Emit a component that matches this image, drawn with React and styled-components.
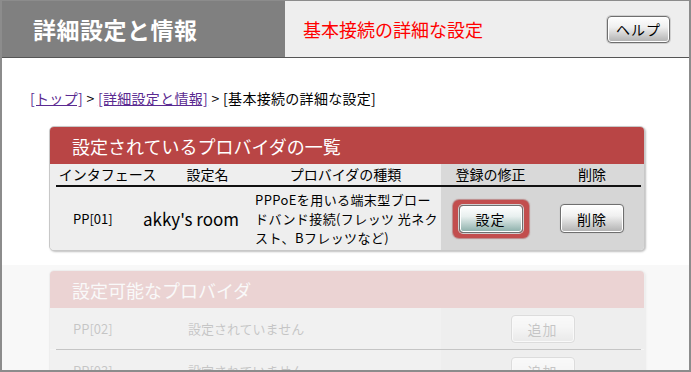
import { createGlobalStyle, styled } from "styled-components";

const GlobalStyle = createGlobalStyle`
	html, body {
		margin: 0;
		padding: 0;
		background: #fff;
	}
	body {
		font-family: "Noto Sans CJK JP", "Noto Sans", sans-serif;
		color: #000;
	}
`;

const Frame = styled.div`
	box-sizing: border-box;
	width: 691px;
	height: 372px;
	border: 2px solid #8c8c8c;
	border-top-width: 1px;
	overflow: hidden;
	background: #fff;
`;

const Header = styled.header`
	display: flex;
	height: 56px;
	border-bottom: 1px solid #555;
`;

const HeaderTitle = styled.h1`
	box-sizing: border-box;
	width: 283px;
	margin: 0;
	padding-left: 31px;
	display: flex;
	align-items: center;
	background: #808080;
	color: #fff;
	font-size: 23px;
	font-weight: 700;
	letter-spacing: 0.5px;
`;

const HeaderBar = styled.div`
	flex: 1;
	display: flex;
	align-items: center;
	justify-content: space-between;
	padding: 0 19px 0 18px;
	background: #eeeeee;
`;

const PageTitle = styled.h2`
	margin: 0;
	color: #ff0000;
	font-size: 18px;
	font-weight: 400;
`;

const Button = styled.button`
	box-sizing: border-box;
	width: ${(p) => p.$width || 64}px;
	height: ${(p) => p.$height || 28}px;
	padding: 0;
	border: 1px solid #6f6f6f;
	border-radius: 4px;
	background: ${(p) =>
		p.$tone === "teal"
			? "linear-gradient(#ffffff 0%, #e8f0ef 40%, #8aaea9 100%)"
			: "linear-gradient(#ffffff 0%, #f0f0f0 40%, #b0b0b0 100%)"};
	box-shadow: inset 0 0 0 1px #fff, 0 0 0 1px #d0d0d0;
	font-family: inherit;
	font-size: 14px;
	color: #000;
	letter-spacing: 1px;
	cursor: pointer;
`;

const FocusRing = styled.span`
	display: inline-flex;
	padding: 5px 6px;
	border-radius: 6px;
	background: #c24e4e;
	box-shadow: 0 0 1px 1px rgba(160, 60, 60, 0.5);
`;

const Content = styled.main`
	padding-top: 30px;
`;

const Breadcrumb = styled.nav`
	margin-left: 28px;
	font-size: 14px;
	line-height: 20px;
	letter-spacing: 0.3px;
`;

const Crumb = styled.a`
	color: #5b2a91;
	text-decoration: underline;
`;

const Panel = styled.section`
	box-sizing: border-box;
	width: 596px;
	margin-left: 47px;
	margin-top: ${(p) => p.$top || 0}px;
	border: 1px solid #c8c8c8;
	border-radius: 5px;
	overflow: hidden;
	box-shadow: 1px 1px 2px rgba(0, 0, 0, 0.25);
	background: #eeeeee;
`;

const PanelTitle = styled.h3`
	margin: 0;
	height: 37px;
	padding-left: 22px;
	display: flex;
	align-items: center;
	background: #b94545;
	color: #fff;
	font-size: 18px;
	font-weight: 400;
`;

const Row = styled.div`
	display: grid;
	grid-template-columns: ${(p) => p.$cols || "115px 85px 191px 99px 1fr"};
	height: ${(p) => p.$height}px;
	background: ${(p) => p.$bg || "#eeeeee"};
`;

const Cell = styled.div`
	display: flex;
	align-items: center;
	justify-content: ${(p) => p.$align || "center"};
	padding-left: ${(p) => p.$pad || 0}px;
	font-size: ${(p) => p.$size || 14}px;
	font-weight: 400;
	line-height: 19px;
	white-space: nowrap;
	letter-spacing: ${(p) => p.$spacing || 0}px;
	background: ${(p) => p.$shade || "transparent"};
`;

const Rule = styled.div`
	height: ${(p) => p.$thick || 1}px;
	margin: 0 3px 0 6px;
	background: ${(p) => p.$color || "#111"};
`;

const RuleWrap = styled.div`
	background: linear-gradient(to right, #eeeeee 391px, #d6d6d6 391px);
`;

const Faded = styled.div`
	margin-top: 14px;
	padding-top: 5px;
	height: 120px;
	background: #f8f8f8;
`;

const FadedInner = styled.div`
	opacity: 0.2;
`;

const bodyCols = "90px 110px 191px 99px 1fr";
const addCols = "138px 253px 1fr";
const providerRows = ["PP[02]", "PP[03]"];

const App = () => {
	return (
		<>
			<GlobalStyle />
			<Frame>
				<Header>
					<HeaderTitle>詳細設定と情報</HeaderTitle>
					<HeaderBar>
						<PageTitle>基本接続の詳細な設定</PageTitle>
						<Button $width={63} $height={27}>
							ヘルプ
						</Button>
					</HeaderBar>
				</Header>

				<Content>
					<Breadcrumb>
						<Crumb href="#">[トップ]</Crumb> &gt;{" "}
						<Crumb href="#">[詳細設定と情報]</Crumb> &gt;{" "}
						[基本接続の詳細な設定]
					</Breadcrumb>

					<Panel $top={18}>
						<PanelTitle>設定されているプロバイダの一覧</PanelTitle>
						<Row $height={21}>
							<Cell>インタフェース</Cell>
							<Cell>設定名</Cell>
							<Cell>プロバイダの種類</Cell>
							<Cell $shade="#d9d9d9">登録の修正</Cell>
							<Cell $shade="#d9d9d9">削除</Cell>
						</Row>
						<RuleWrap>
							<Rule $thick={2} />
						</RuleWrap>
						<Row $height={63} $cols={bodyCols}>
							<Cell $align="flex-start" $pad={23} $size={13}>
								PP[01]
							</Cell>
							<Cell $align="flex-start" $pad={3} $size={17}>
								akky's room
							</Cell>
							<Cell $align="flex-start" $pad={5} $size={13} $spacing={0.4}>
								PPPoEを用いる端末型ブロー
								<br />
								ドバンド接続(フレッツ 光ネク
								<br />
								スト、Bフレッツなど)
							</Cell>
							<Cell $shade="#d6d6d6">
								<FocusRing>
									<Button $tone="teal" $height={28}>
										設定
									</Button>
								</FocusRing>
							</Cell>
							<Cell $shade="#d6d6d6">
								<Button $height={29}>削除</Button>
							</Cell>
						</Row>
					</Panel>

					<Faded>
						<FadedInner>
							<Panel>
								<PanelTitle>設定可能なプロバイダ</PanelTitle>
								{providerRows.map((name) => (
									<div key={name}>
										<Row $height={41} $cols={addCols} $bg="#d8d8d8">
											<Cell $align="flex-start" $pad={23} $size={13}>
												{name}
											</Cell>
											<Cell $align="flex-start" $size={13}>
												設定されていません
											</Cell>
											<Cell $shade="#c8c8c8">
												<Button $height={28}>追加</Button>
											</Cell>
										</Row>
										<Rule $color="#000" />
									</div>
								))}
							</Panel>
						</FadedInner>
					</Faded>
				</Content>
			</Frame>
		</>
	);
};

export default App;
